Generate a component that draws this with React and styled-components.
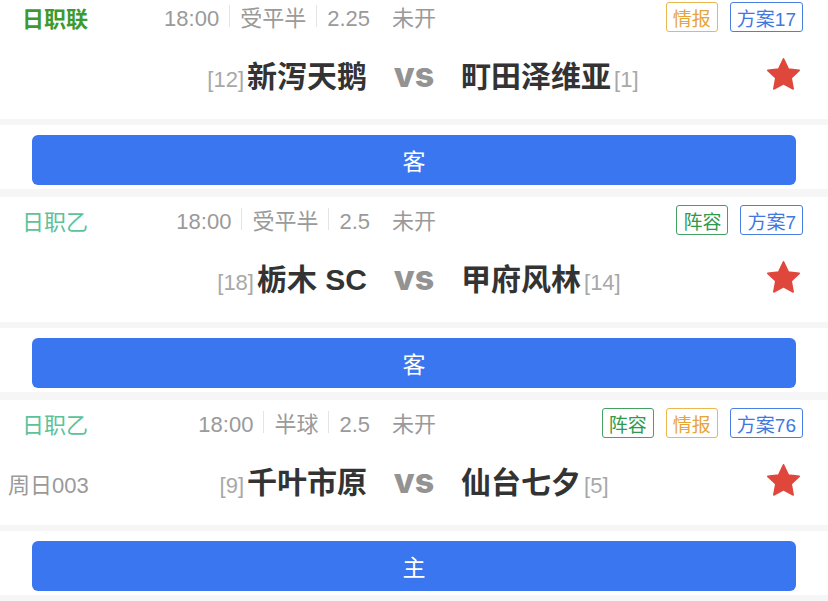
import React from 'react';
import styled, { createGlobalStyle } from 'styled-components';

const GlobalStyle = createGlobalStyle`
  body {
    margin: 0;
    background: #f6f6f6;
    font-family: "Liberation Sans", "Noto Sans CJK SC", sans-serif;
  }
`

const matches = [
  {
    league: '日职联', strong: true,
    time: '18:00', handicap: '受平半', odds: '2.25', status: '未开',
    tags: [{ text: '情报', kind: 'orange' }, { text: '方案17', kind: 'blue' }],
    homeRank: 12, home: '新泻天鹅', awayRank: 1, away: '町田泽维亚',
    pick: '客'
  },
  {
    league: '日职乙',
    time: '18:00', handicap: '受平半', odds: '2.5', status: '未开',
    tags: [{ text: '阵容', kind: 'green' }, { text: '方案7', kind: 'blue' }],
    homeRank: 18, home: '栃木 SC', awayRank: 14, away: '甲府风林',
    pick: '客'
  },
  {
    league: '日职乙', code: '周日003',
    time: '18:00', handicap: '半球', odds: '2.5', status: '未开',
    tags: [{ text: '阵容', kind: 'green' }, { text: '情报', kind: 'orange' }, { text: '方案76', kind: 'blue' }],
    homeRank: 9, home: '千叶市原', awayRank: 5, away: '仙台七夕',
    pick: '主'
  }
]

const tagColors = {
  orange: { border: '#ecb650', text: '#e6a43a' },
  blue: { border: '#4a80e2', text: '#3f78de' },
  green: { border: '#45a063', text: '#2f9a4f' }
}

const List = styled.div`
  margin-top: -6px;
`

const Card = styled.div`
  background: #fff;
  height: 125px;
  box-sizing: border-box;
  padding-top: 8px;
  margin-bottom: 6px;
`

const Header = styled.div`
  display: flex;
  align-items: center;
  height: 30px;
  padding: 0 25px 0 22px;
`

const League = styled.div`
  width: 140px;
  flex-shrink: 0;
  font-size: 22px;
  font-weight: ${p => (p.strong ? 700 : 400)};
  color: ${p => (p.strong ? '#3c9a2e' : '#5cc29a')};
`

const Info = styled.div`
  width: 274px;
  display: flex;
  justify-content: flex-end;
  align-items: baseline;
  font-size: 22px;
  color: #9a9a9a;
  padding-bottom: 2px;
`

const Sep = styled.span`
  align-self: center;
  width: 1px;
  height: 22px;
  background: #e4e4e4;
  margin: 0 10px;
`

const Status = styled.span`
  margin-left: 22px;
`

const Tags = styled.div`
  margin-left: auto;
  display: flex;
  gap: 12px;
`

const Tag = styled.span`
  height: 30px;
  box-sizing: border-box;
  display: flex;
  align-items: center;
  padding: 0 6px;
  border: 1px solid ${p => tagColors[p.kind].border};
  color: ${p => tagColors[p.kind].text};
  border-radius: 3px;
  font-size: 19px;
`

const TeamRow = styled.div`
  display: grid;
  grid-template-columns: 1fr 94px 1fr;
  align-items: center;
  height: 40px;
  margin-top: 20px;
  padding: 0 8px;
`

const Side = styled.div`
  display: flex;
  align-items: baseline;
  justify-content: ${p => (p.home ? 'flex-end' : 'flex-start')};
  padding-bottom: 6px;
`

const Code = styled.span`
  margin-right: auto;
  font-size: 22px;
  color: #9a9a9a;
`

const Rank = styled.span`
  font-size: 22px;
  color: #a8a8a8;
  margin: 0 3px;
`

const TeamName = styled.span`
  font-size: 30px;
  font-weight: 700;
  color: #333;
`

const Vs = styled.div`
  text-align: center;
  font-family: Inter, "Liberation Sans", sans-serif;
  font-size: 34px;
  font-weight: 800;
  color: #939393;
  line-height: 1;
  padding-bottom: 4px;
`

const Star = styled.svg`
  align-self: center;
  margin-left: auto;
  margin-right: 18px;
  width: 37px;
  height: 37px;
`

const PickSection = styled.div`
  background: #fff;
  height: 64px;
  box-sizing: border-box;
  padding: 10px 32px 4px;
  margin-bottom: 8px;
`

const PickButton = styled.div`
  height: 50px;
  border-radius: 6px;
  background: #3a76f0;
  color: #fff;
  font-size: 23px;
  display: flex;
  align-items: center;
  justify-content: center;
`

function StarIcon() {
  return (
    <Star viewBox="0 0 24 24">
      <path
        d="M12 1.8l3.1 6.6 7.1.9-5.2 5 1.3 7.1L12 18l-6.3 3.4 1.3-7.1-5.2-5 7.1-.9z"
        fill="#e0473c"
        stroke="#e0473c"
        strokeWidth="1"
        strokeLinejoin="round"
      />
    </Star>
  )
}

function MatchCard({ match }) {
  return (
    <>
      <Card>
        <Header>
          <League strong={match.strong}>{match.league}</League>
          <Info>
            <span>{match.time}</span>
            <Sep />
            <span>{match.handicap}</span>
            <Sep />
            <span>{match.odds}</span>
            <Status>{match.status}</Status>
          </Info>
          <Tags>
            {match.tags.map(tag => (
              <Tag key={tag.text} kind={tag.kind}>{tag.text}</Tag>
            ))}
          </Tags>
        </Header>
        <TeamRow>
          <Side home>
            {match.code && <Code>{match.code}</Code>}
            <Rank>[{match.homeRank}]</Rank>
            <TeamName>{match.home}</TeamName>
          </Side>
          <Vs>vs</Vs>
          <Side>
            <TeamName>{match.away}</TeamName>
            <Rank>[{match.awayRank}]</Rank>
            <StarIcon />
          </Side>
        </TeamRow>
      </Card>
      <PickSection>
        <PickButton>{match.pick}</PickButton>
      </PickSection>
    </>
  )
}

function App() {
  return (
    <>
      <GlobalStyle />
      <List>
        {matches.map((m, i) => (
          <MatchCard key={i} match={m} />
        ))}
      </List>
    </>
  )
}

export default App
